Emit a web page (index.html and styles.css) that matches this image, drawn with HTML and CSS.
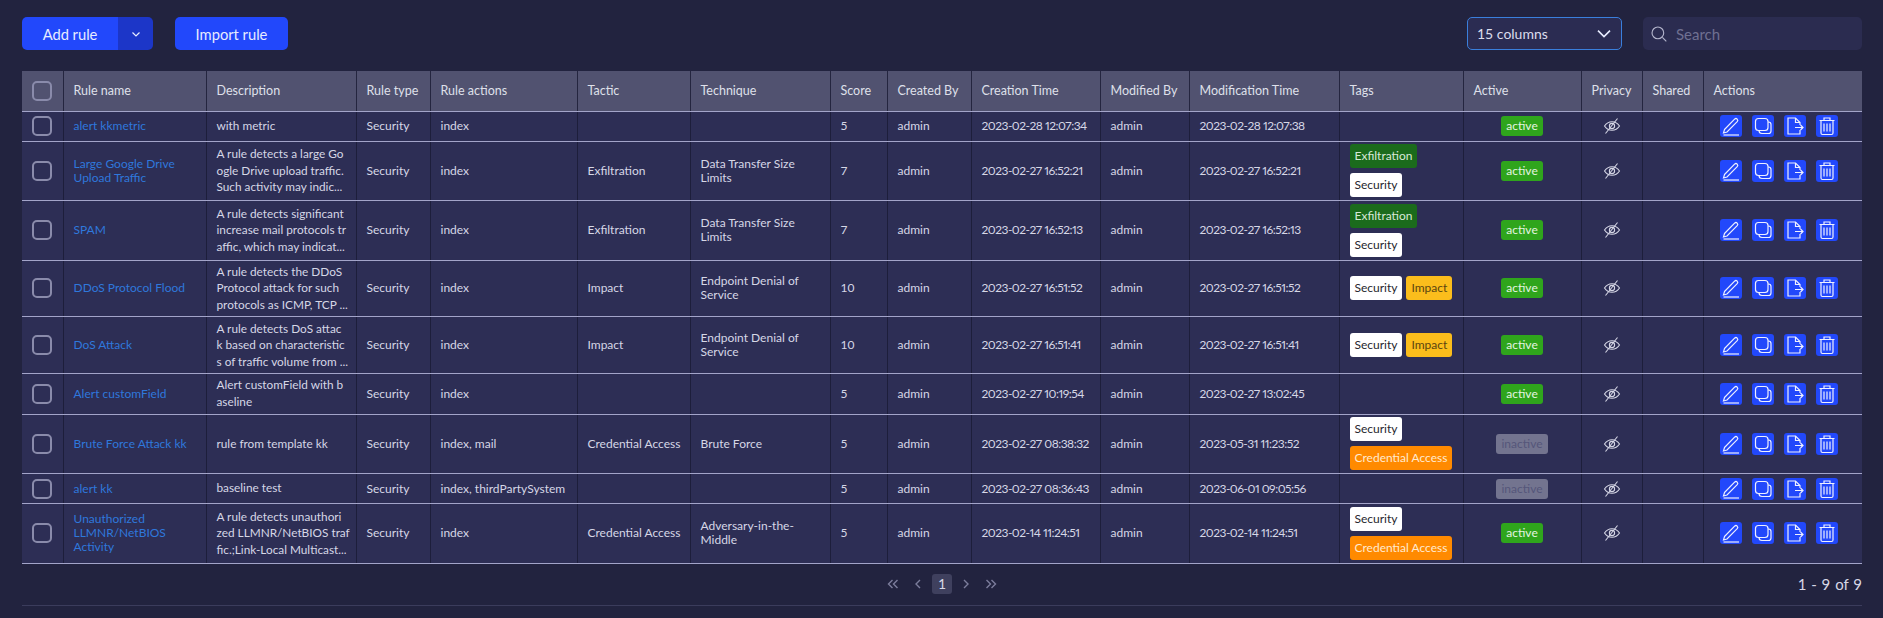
FILE: index.html
```html
<!DOCTYPE html>
<html lang="en">
<head>
    <meta charset="UTF-8">
    <title>Rules</title>
    <link rel="stylesheet" href="styles.css">
</head>
<body>
<svg class="sprite" xmlns="http://www.w3.org/2000/svg">
    <symbol id="i-edit" viewBox="0 0 22 22">
        <path d="M4.500 14.500 14.600 4.200c.8-.8 1.900-.8 2.600-.1s.7 1.800 0 2.600L7 17l-3.500 1z"/>
        <path d="M3.500 20h15.500"/>
    </symbol>
    <symbol id="i-copy" viewBox="0 0 22 22">
        <rect x="3.500" y="3.500" width="12.500" height="12" rx="3"/>
        <path d="M16 7h.5A2.500 2.500 0 0 1 19 9.500V16a2.500 2.500 0 0 1-2.500 2.500H10A3 3 0 0 1 7 15.500"/>
    </symbol>
    <symbol id="i-export" viewBox="0 0 22 22">
        <path d="M16 15v4H4V3h7.500L16 7.500V10"/>
        <path d="M11.500 3v4.500H16"/>
        <path d="M11 12.500h8M16.500 10l2.500 2.500-2.500 2.500"/>
    </symbol>
    <symbol id="i-trash" viewBox="0 0 22 22">
        <path d="M3.500 5.500h15M8 5.500V3h6v2.500"/>
        <path d="M5 5.500V18a1.500 1.500 0 0 0 1.500 1.500h9A1.500 1.500 0 0 0 17 18V5.500"/>
        <path d="M8 8.500v8M11 8.500v8M14 8.500v8"/>
    </symbol>
    <symbol id="i-eye" viewBox="0 0 18 18">
        <path d="M1.500 9C3.500 6 6 4.700 9 4.700S14.500 6 16.500 9c-2 3-4.500 4.300-7.500 4.300S3.500 12 1.500 9z"/>
        <circle cx="9" cy="9" r="2.600"/>
        <path d="M14.500 1.500 2.500 16.500"/>
    </symbol>
</svg>

<main class="page">
    <div class="toolbar">
        <div class="split-btn">
            <button class="btn btn-main">Add rule</button>
            <button class="btn btn-caret">
                <svg class="caret" viewBox="0 0 12 12"><path d="M2.500 4.500 6 8l3.500-3.500"/></svg>
            </button>
        </div>
        <button class="btn btn-import">Import rule</button>
        <div class="column-select">
            <span>15 columns</span>
            <svg class="caret caret-lg" viewBox="0 0 12 12"><path d="M1.500 3.500 6 8l4.500-4.500"/></svg>
        </div>
        <div class="search">
            <svg class="search-icon" viewBox="0 0 16 16"><circle cx="7" cy="7" r="5.200"/><path d="m11 11 3.500 3.500"/></svg>
            <span>Search</span>
        </div>
    </div>

    <table class="rules">
        <colgroup>
            <col class="w-check"><col class="w-name"><col class="w-desc"><col class="w-type"><col class="w-actions-text">
            <col class="w-tactic"><col class="w-technique"><col class="w-score"><col class="w-by"><col class="w-time">
            <col class="w-modby"><col class="w-time2"><col class="w-tags"><col class="w-active"><col class="w-privacy">
            <col class="w-privacy"><col class="w-actions">
        </colgroup>
        <thead>
            <tr>
                <th class="check"><span class="box"></span></th>
                <th>Rule name</th><th>Description</th><th>Rule type</th><th>Rule actions</th><th>Tactic</th>
                <th>Technique</th><th>Score</th><th>Created By</th><th>Creation Time</th><th>Modified By</th>
                <th>Modification Time</th><th>Tags</th><th>Active</th><th>Privacy</th><th>Shared</th><th>Actions</th>
            </tr>
        </thead>
        <tbody>
            <tr>
                <td class="check"><span class="box"></span></td>
                <td><a href="#">alert kkmetric</a></td>
                <td><div class="desc">with metric</div></td>
                <td>Security</td><td class="nowrap">index</td><td></td><td></td><td>5</td><td>admin</td>
                <td class="date">2023-02-28 12:07:34</td><td>admin</td><td class="date">2023-02-28 12:07:38</td>
                <td></td>
                <td class="center"><span class="status on">active</span></td>
                <td class="center"><svg class="eye"><use href="#i-eye"/></svg></td>
                <td></td>
                <td><div class="row-actions">
                    <span class="act"><svg><use href="#i-edit"/></svg></span><span class="act"><svg><use href="#i-copy"/></svg></span><span class="act"><svg><use href="#i-export"/></svg></span><span class="act"><svg><use href="#i-trash"/></svg></span>
                </div></td>
            </tr>
            <tr>
                <td class="check"><span class="box"></span></td>
                <td><a href="#">Large Google Drive Upload Traffic</a></td>
                <td><div class="desc">A rule detects a large Go<br>ogle Drive upload traffic.<br>Such activity may indic...</div></td>
                <td>Security</td><td class="nowrap">index</td><td class="nowrap">Exfiltration</td><td>Data Transfer Size Limits</td><td>7</td><td>admin</td>
                <td class="date">2023-02-27 16:52:21</td><td>admin</td><td class="date">2023-02-27 16:52:21</td>
                <td><div class="tags"><span class="tag green">Exfiltration</span><span class="tag white">Security</span></div></td>
                <td class="center"><span class="status on">active</span></td>
                <td class="center"><svg class="eye"><use href="#i-eye"/></svg></td>
                <td></td>
                <td><div class="row-actions">
                    <span class="act"><svg><use href="#i-edit"/></svg></span><span class="act"><svg><use href="#i-copy"/></svg></span><span class="act"><svg><use href="#i-export"/></svg></span><span class="act"><svg><use href="#i-trash"/></svg></span>
                </div></td>
            </tr>
            <tr>
                <td class="check"><span class="box"></span></td>
                <td><a href="#">SPAM</a></td>
                <td><div class="desc">A rule detects significant<br>increase mail protocols tr<br>affic, which may indicat...</div></td>
                <td>Security</td><td class="nowrap">index</td><td class="nowrap">Exfiltration</td><td>Data Transfer Size Limits</td><td>7</td><td>admin</td>
                <td class="date">2023-02-27 16:52:13</td><td>admin</td><td class="date">2023-02-27 16:52:13</td>
                <td><div class="tags"><span class="tag green">Exfiltration</span><span class="tag white">Security</span></div></td>
                <td class="center"><span class="status on">active</span></td>
                <td class="center"><svg class="eye"><use href="#i-eye"/></svg></td>
                <td></td>
                <td><div class="row-actions">
                    <span class="act"><svg><use href="#i-edit"/></svg></span><span class="act"><svg><use href="#i-copy"/></svg></span><span class="act"><svg><use href="#i-export"/></svg></span><span class="act"><svg><use href="#i-trash"/></svg></span>
                </div></td>
            </tr>
            <tr>
                <td class="check"><span class="box"></span></td>
                <td><a href="#">DDoS Protocol Flood</a></td>
                <td><div class="desc">A rule detects the DDoS<br>Protocol attack for such<br>protocols as ICMP, TCP ...</div></td>
                <td>Security</td><td class="nowrap">index</td><td class="nowrap">Impact</td><td>Endpoint Denial of Service</td><td>10</td><td>admin</td>
                <td class="date">2023-02-27 16:51:52</td><td>admin</td><td class="date">2023-02-27 16:51:52</td>
                <td><div class="tags tags-inline"><span class="tag white">Security</span><span class="tag yellow">Impact</span></div></td>
                <td class="center"><span class="status on">active</span></td>
                <td class="center"><svg class="eye"><use href="#i-eye"/></svg></td>
                <td></td>
                <td><div class="row-actions">
                    <span class="act"><svg><use href="#i-edit"/></svg></span><span class="act"><svg><use href="#i-copy"/></svg></span><span class="act"><svg><use href="#i-export"/></svg></span><span class="act"><svg><use href="#i-trash"/></svg></span>
                </div></td>
            </tr>
            <tr>
                <td class="check"><span class="box"></span></td>
                <td><a href="#">DoS Attack</a></td>
                <td><div class="desc">A rule detects DoS attac<br>k based on characteristic<br>s of traffic volume from ...</div></td>
                <td>Security</td><td class="nowrap">index</td><td class="nowrap">Impact</td><td>Endpoint Denial of Service</td><td>10</td><td>admin</td>
                <td class="date">2023-02-27 16:51:41</td><td>admin</td><td class="date">2023-02-27 16:51:41</td>
                <td><div class="tags tags-inline"><span class="tag white">Security</span><span class="tag yellow">Impact</span></div></td>
                <td class="center"><span class="status on">active</span></td>
                <td class="center"><svg class="eye"><use href="#i-eye"/></svg></td>
                <td></td>
                <td><div class="row-actions">
                    <span class="act"><svg><use href="#i-edit"/></svg></span><span class="act"><svg><use href="#i-copy"/></svg></span><span class="act"><svg><use href="#i-export"/></svg></span><span class="act"><svg><use href="#i-trash"/></svg></span>
                </div></td>
            </tr>
            <tr>
                <td class="check"><span class="box"></span></td>
                <td><a href="#">Alert customField</a></td>
                <td><div class="desc">Alert customField with b<br>aseline</div></td>
                <td>Security</td><td class="nowrap">index</td><td></td><td></td><td>5</td><td>admin</td>
                <td class="date">2023-02-27 10:19:54</td><td>admin</td><td class="date">2023-02-27 13:02:45</td>
                <td></td>
                <td class="center"><span class="status on">active</span></td>
                <td class="center"><svg class="eye"><use href="#i-eye"/></svg></td>
                <td></td>
                <td><div class="row-actions">
                    <span class="act"><svg><use href="#i-edit"/></svg></span><span class="act"><svg><use href="#i-copy"/></svg></span><span class="act"><svg><use href="#i-export"/></svg></span><span class="act"><svg><use href="#i-trash"/></svg></span>
                </div></td>
            </tr>
            <tr>
                <td class="check"><span class="box"></span></td>
                <td><a href="#">Brute Force Attack kk</a></td>
                <td><div class="desc">rule from template kk</div></td>
                <td>Security</td><td class="nowrap">index, mail</td><td class="nowrap">Credential Access</td><td>Brute Force</td><td>5</td><td>admin</td>
                <td class="date">2023-02-27 08:38:32</td><td>admin</td><td class="date">2023-05-31 11:23:52</td>
                <td><div class="tags"><span class="tag white">Security</span><span class="tag orange">Credential Access</span></div></td>
                <td class="center"><span class="status off">inactive</span></td>
                <td class="center"><svg class="eye"><use href="#i-eye"/></svg></td>
                <td></td>
                <td><div class="row-actions">
                    <span class="act"><svg><use href="#i-edit"/></svg></span><span class="act"><svg><use href="#i-copy"/></svg></span><span class="act"><svg><use href="#i-export"/></svg></span><span class="act"><svg><use href="#i-trash"/></svg></span>
                </div></td>
            </tr>
            <tr>
                <td class="check"><span class="box"></span></td>
                <td><a href="#">alert kk</a></td>
                <td><div class="desc">baseline test</div></td>
                <td>Security</td><td class="nowrap">index, thirdPartySystem</td><td></td><td></td><td>5</td><td>admin</td>
                <td class="date">2023-02-27 08:36:43</td><td>admin</td><td class="date">2023-06-01 09:05:56</td>
                <td></td>
                <td class="center"><span class="status off">inactive</span></td>
                <td class="center"><svg class="eye"><use href="#i-eye"/></svg></td>
                <td></td>
                <td><div class="row-actions">
                    <span class="act"><svg><use href="#i-edit"/></svg></span><span class="act"><svg><use href="#i-copy"/></svg></span><span class="act"><svg><use href="#i-export"/></svg></span><span class="act"><svg><use href="#i-trash"/></svg></span>
                </div></td>
            </tr>
            <tr>
                <td class="check"><span class="box"></span></td>
                <td><a href="#">Unauthorized LLMNR/NetBIOS Activity</a></td>
                <td><div class="desc">A rule detects unauthori<br>zed LLMNR/NetBIOS traf<br>fic.;Link-Local Multicast...</div></td>
                <td>Security</td><td class="nowrap">index</td><td class="nowrap">Credential Access</td><td>Adversary-in-the-Middle</td><td>5</td><td>admin</td>
                <td class="date">2023-02-14 11:24:51</td><td>admin</td><td class="date">2023-02-14 11:24:51</td>
                <td><div class="tags"><span class="tag white">Security</span><span class="tag orange">Credential Access</span></div></td>
                <td class="center"><span class="status on">active</span></td>
                <td class="center"><svg class="eye"><use href="#i-eye"/></svg></td>
                <td></td>
                <td><div class="row-actions">
                    <span class="act"><svg><use href="#i-edit"/></svg></span><span class="act"><svg><use href="#i-copy"/></svg></span><span class="act"><svg><use href="#i-export"/></svg></span><span class="act"><svg><use href="#i-trash"/></svg></span>
                </div></td>
            </tr>
        </tbody>
    </table>

    <div class="pager">
        <div class="pager-links">
            <svg class="pg pg-double" viewBox="0 0 12 12"><path d="M6 2 2 6l4 4M11 2 7 6l4 4"/></svg>
            <svg class="pg" viewBox="0 0 6 12"><path d="M5 2 1 6l4 4"/></svg>
            <span class="pg-current">1</span>
            <svg class="pg" viewBox="0 0 6 12"><path d="m1 2 4 4-4 4"/></svg>
            <svg class="pg pg-double" viewBox="0 0 12 12"><path d="m1 2 4 4-4 4M6 2l4 4-4 4"/></svg>
        </div>
        <span class="pager-count">1 - 9 of 9</span>
    </div>
</main>
</body>
</html>
```

FILE: styles.css
```css
* {
    box-sizing: border-box;
}

body {
    margin: 0;
    background: #22233f;
    color: #d6d7e6;
    font-family: "Lato", "Noto Sans", sans-serif;
    font-size: 12.5px;
}

.sprite {
    display: none;
}

.page {
    padding: 17px 21px 0 22px;
}

/* top bar */
.toolbar {
    display: flex;
    height: 33px;
}

.btn {
    border: 0;
    padding: 0;
    color: #e8ecff;
    font-family: inherit;
    font-size: 14.7px;
    background: #2248fb;
}

.split-btn {
    display: flex;
    width: 131px;
    border-radius: 5px;
    overflow: hidden;
}

.btn-main {
    width: 96px;
}

.btn-caret {
    width: 35px;
    background: #1c36c8;
    display: flex;
    align-items: center;
    justify-content: center;
}

.btn-import {
    width: 113px;
    margin-left: 22px;
    border-radius: 5px;
}

.caret {
    width: 12px;
    height: 12px;
    fill: none;
    stroke: #e8ecff;
    stroke-width: 1.2;
}

.caret-lg {
    width: 16px;
    height: 16px;
}

.column-select {
    display: flex;
    align-items: center;
    justify-content: space-between;
    width: 155px;
    margin-left: auto;
    padding: 0 9px 0 9px;
    border: 1px solid #3a7fdc;
    border-radius: 5px;
    background: #2b2c52;
    color: #dcdded;
    font-size: 14px;
}

.search {
    display: flex;
    align-items: center;
    gap: 8px;
    width: 219px;
    margin-left: 21px;
    padding-left: 7px;
    border-radius: 5px;
    background: #2b2c50;
    color: #6f7092;
    font-size: 15px;
}

.search-icon {
    width: 18px;
    height: 18px;
    fill: none;
    stroke: #b4b5cc;
    stroke-width: 1;
}

/* table */
.rules {
    width: 1840px;
    margin-top: 21px;
    border-collapse: collapse;
    table-layout: fixed;
}

.w-check { width: 41px; }
.w-name { width: 143px; }
.w-desc { width: 150px; }
.w-type { width: 74px; }
.w-actions-text { width: 147px; }
.w-tactic { width: 113px; }
.w-technique { width: 140px; }
.w-score { width: 57px; }
.w-by { width: 84px; }
.w-time { width: 129px; }
.w-modby { width: 89px; }
.w-time2 { width: 150px; }
.w-tags { width: 124px; }
.w-active { width: 118px; }
.w-privacy { width: 61px; }
.w-actions { width: 159px; }

.rules th {
    height: 40px;
    padding: 0 10px;
    background: #515270;
    color: #dfe0ea;
    font-weight: 400;
    text-align: left;
    white-space: nowrap;
    border-right: 1px solid #24253f;
    border-bottom: 1px solid #a3a4c9;
}

.rules td {
    height: 30px;
    padding: 2px 10px;
    background: #2d2e55;
    border-right: 1px solid #1d1e3b;
    border-bottom: 1px solid #a3a4c9;
    font-size: 12px;
    line-height: 14px;
}

.rules th:last-child,
.rules td:last-child {
    border-right: 0;
}

.rules .check {
    padding: 0;
    text-align: center;
}

.box {
    display: block;
    width: 20px;
    height: 20px;
    margin: 0 auto;
    border: 2px solid #8a8bab;
    border-radius: 5px;
}

.rules a {
    color: #2f78dc;
    font-size: 12px;
    text-decoration: none;
}

.desc {
    margin: 1.200px 0;
    font-size: 11.800px;
    line-height: 16.500px;
    white-space: nowrap;
}

.nowrap {
    white-space: nowrap;
}

.date {
    font-variant-numeric: proportional-nums;
    letter-spacing: -0.5px;
    white-space: nowrap;
}

.center {
    text-align: center;
}

.tags {
    display: flex;
    flex-direction: column;
    align-items: flex-start;
    gap: 5px;
    margin: 0.750px 0;
}

.tags-inline {
    flex-direction: row;
    gap: 4px;
}

.tag {
    display: block;
    height: 24px;
    padding: 0 5px;
    border-radius: 3px;
    line-height: 24px;
    white-space: nowrap;
}

.green {
    background: #1b6b1c;
    color: #d8e8d8;
}

.white {
    background: #fff;
    color: #26262e;
}

.yellow {
    background: #fbbd1c;
    color: #5a4410;
}

.orange {
    background: #ff8a00;
    color: #ffe9cf;
}

.status {
    display: inline-block;
    height: 20px;
    padding: 0 5.500px;
    border-radius: 3px;
    line-height: 20px;
    vertical-align: middle;
}

.on {
    background: #2fa51c;
    color: #e4f4e0;
}

.off {
    background: #73748f;
    color: #55567a;
}

.eye {
    display: block;
    width: 18px;
    height: 18px;
    margin: 0 auto;
    fill: none;
    stroke: #d6d7e6;
    stroke-width: 1.100;
}

.row-actions {
    display: flex;
    gap: 10px;
    padding-left: 6px;
}

.act {
    width: 22px;
    height: 22px;
    border-radius: 3px;
    background: #2248fb;
}

.act svg {
    display: block;
    width: 22px;
    height: 22px;
    fill: none;
    stroke: #eef0ff;
    stroke-width: 1.2;
}

/* footer of the table */
.pager {
    position: relative;
    display: flex;
    align-items: center;
    justify-content: center;
    height: 42px;
    border-bottom: 1px solid #3b3c5c;
}

.pager-links {
    display: flex;
    align-items: center;
    gap: 16px;
}

.pg {
    width: 6px;
    height: 12px;
    fill: none;
    stroke: #7c7d9c;
    stroke-width: 1.400;
}

.pg-double {
    width: 13px;
}

.pg-current {
    width: 20px;
    height: 20px;
    margin: 0 -5px;
    border-radius: 3px;
    background: #3f405e;
    color: #d6d7e6;
    font-size: 14px;
    line-height: 20px;
    text-align: center;
}

.pager-count {
    position: absolute;
    right: 0;
    font-size: 15px;
    word-spacing: 1px;
}
```
